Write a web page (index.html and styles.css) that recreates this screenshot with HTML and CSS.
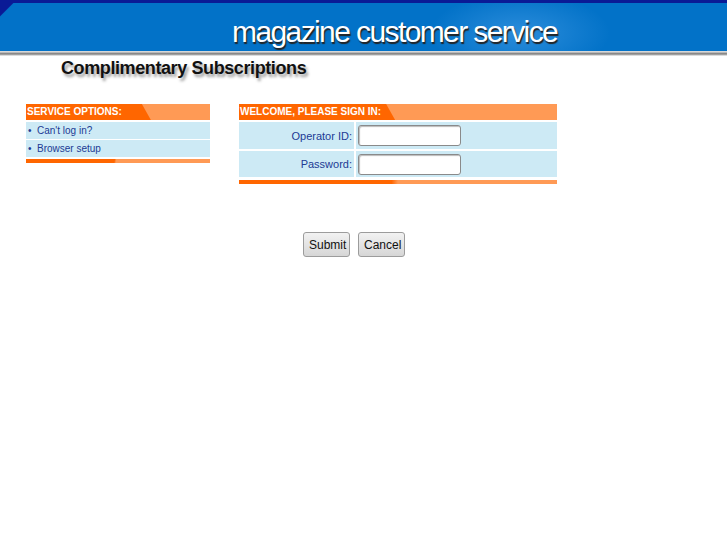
FILE: index.html
```html
<!DOCTYPE HTML>
<html>
<head>
	<meta charset="utf-8" />
	<title>magazine customer service</title>
	<link rel="stylesheet" href="styles.css">
</head>
<body>
	<div class="banner">
		<span class="brand">magazine customer service</span>
	</div>
	<div class="rule"></div>
	<h1 class="page-title">Complimentary Subscriptions</h1>
	<div class="panels">
		<div class="panel options">
			<div class="panel-head"><span class="tab">SERVICE OPTIONS:</span></div>
			<ul class="links">
				<li><a href="#">Can't log in?</a></li>
				<li><a href="#">Browser setup</a></li>
			</ul>
			<div class="panel-foot"></div>
		</div>
		<form class="panel signin" id="SignIn">
			<div class="panel-head"><span class="tab">WELCOME, PLEASE SIGN IN:</span></div>
			<div class="fields">
				<label for="operator">Operator ID:</label>
				<div class="cell"><input id="operator" name="operator" type="text" /></div>
				<label for="password">Password:</label>
				<div class="cell"><input id="password" name="password" type="password" /></div>
			</div>
			<div class="panel-foot"></div>
		</form>
	</div>
	<div class="actions">
		<button type="submit" form="SignIn">Submit</button>
		<button type="reset" form="SignIn">Cancel</button>
	</div>
</body>
</html>
```

FILE: styles.css
```css
body {
	background: #fff;
	font-family: "Liberation Sans", Arial, sans-serif;
	margin: 0;
	padding: 0;
}
.banner {
	background:
		linear-gradient(135deg, #0a1a96 0, #0a1a96 9px, transparent 10px),
		radial-gradient(ellipse 90px 40px at 520px 30px, rgba(120, 190, 255, .35), transparent),
		#0272c8;
	border-top: 3px solid #0a1a96;
	box-sizing: border-box;
	height: 51px;
	padding: 14px 0 0 232px;
}
.brand {
	color: #fff;
	font-size: 30px;
	letter-spacing: -1.6px;
	line-height: 30px;
	text-shadow: 1px 2px 1px #222;
}
.rule {
	background: linear-gradient(#d8d8d8 0, #d8d8d8 1px, #9a9a9a 2px, #777 3px, #c8c8c8 4px, #eee 5px);
	height: 5px;
}
.page-title {
	color: #111;
	font-size: 18px;
	letter-spacing: -.4px;
	line-height: 22px;
	margin: 1px 0 25px 61px;
	text-shadow: 2px 3px 3px #999;
}
.panels {
	display: flex;
	gap: 29px;
	padding-left: 26px;
}
.panel {
	margin: 0;
}
.options {
	width: 184px;
}
.signin {
	width: 318px;
}
.panel-head {
	background: #ff9a55;
	height: 16px;
}
.tab {
	background: #ff6600;
	clip-path: polygon(0 0, calc(100% - 9px) 0, 100% 100%, 0 100%);
	color: #fff;
	display: inline-block;
	font-size: 10px;
	font-weight: bold;
	height: 16px;
	line-height: 16px;
	padding: 0 29px 0 1px;
	vertical-align: top;
}
.signin .tab {
	padding-right: 14px;
}
.links {
	list-style: none;
	margin: 2px 0 0;
	padding: 0;
}
.links li {
	background: #cdeaf5;
	color: #213a94;
	font-size: 10px;
	height: 17px;
	line-height: 17px;
	margin-bottom: 1px;
	padding-left: 2px;
}
.links li:before {
	content: "\2022";
	display: inline-block;
	width: 9px;
}
.links a {
	color: #213a94;
	text-decoration: none;
}
.panel-foot {
	background: linear-gradient(100deg, #ff6600 0, #ff6600 48%, #ff9a55 49%);
	height: 4px;
	margin-top: 2px;
}
.signin .panel-foot {
	background: linear-gradient(95deg, #ff6600 0, #ff6600 48%, #ff9a55 50%);
	margin-top: 3px;
}
.fields {
	display: grid;
	gap: 2px;
	grid-template-columns: 115px 1fr;
	grid-template-rows: 27px 26px;
	margin-top: 2px;
}
.fields label {
	align-items: center;
	background: #cdeaf5;
	color: #213a94;
	display: flex;
	font-size: 11px;
	justify-content: flex-end;
	padding-right: 2px;
}
.fields .cell {
	align-items: center;
	background: #cdeaf5;
	display: flex;
	padding-left: 2px;
}
.fields input {
	background: #fff;
	border: 1px solid #8a8a8a;
	border-radius: 3px;
	box-shadow: inset 1px 1px 1px #bbb;
	box-sizing: border-box;
	height: 21px;
	outline: none;
	width: 103px;
}
.actions {
	display: flex;
	gap: 8px;
	margin-top: 48px;
	padding-left: 303px;
}
.actions button {
	background: linear-gradient(#f2f2f2, #d6d6d6);
	border: 1px solid #9c9c9c;
	border-radius: 3px;
	color: #111;
	font-family: "Liberation Sans", Arial, sans-serif;
	font-size: 12px;
	height: 25px;
	padding: 0 5px;
	width: 47px;
}
```
